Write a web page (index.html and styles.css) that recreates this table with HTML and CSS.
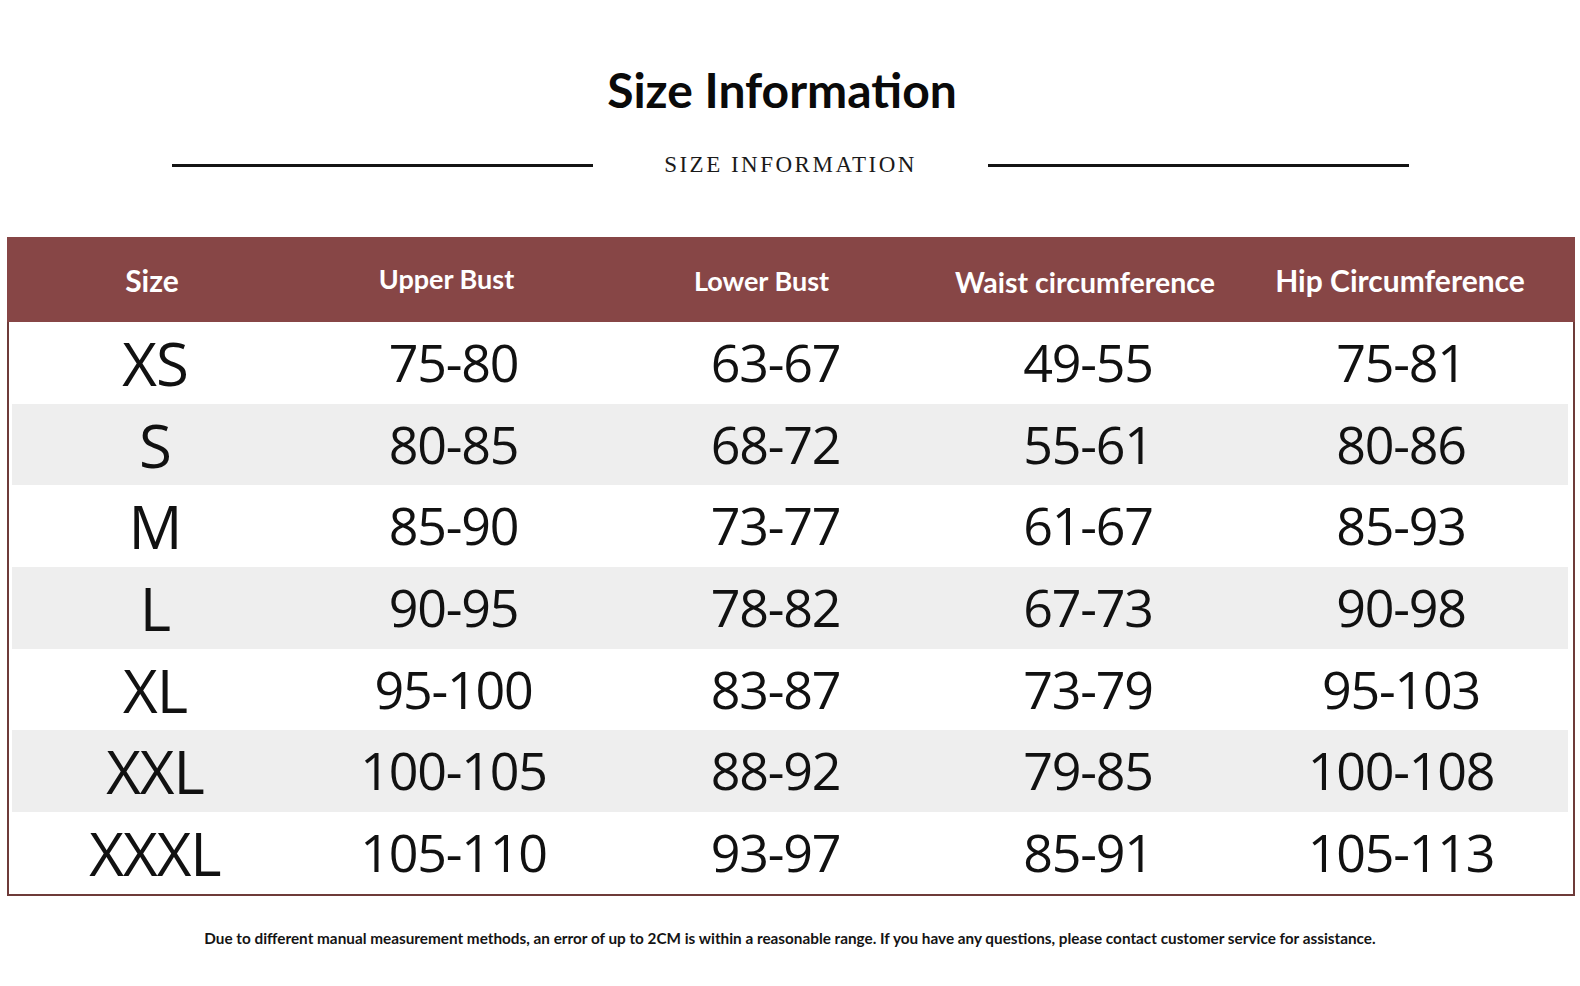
FILE: index.html
```html
<!DOCTYPE html>
<html lang="en">
<head>
<meta charset="utf-8">
<title>Size Information</title>
<link rel="stylesheet" href="styles.css">
</head>
<body>
<div class="page">
  <h1 class="title">Size Information</h1>
  <div class="subtitle">
    <span class="rule"></span>
    <span class="subtitle-text">SIZE INFORMATION</span>
    <span class="rule"></span>
  </div>
  <div class="table">
    <div class="row head">
      <div class="cell h-size">Size</div>
      <div class="cell h-upper">Upper Bust</div>
      <div class="cell h-lower">Lower Bust</div>
      <div class="cell h-waist">Waist circumference</div>
      <div class="cell h-hip">Hip Circumference</div>
    </div>
    <div class="body">
      <div class="row"><div class="cell size">XS</div><div class="cell">75-80</div><div class="cell">63-67</div><div class="cell">49-55</div><div class="cell">75-81</div></div>
      <div class="row alt"><div class="cell size">S</div><div class="cell">80-85</div><div class="cell">68-72</div><div class="cell">55-61</div><div class="cell">80-86</div></div>
      <div class="row"><div class="cell size">M</div><div class="cell">85-90</div><div class="cell">73-77</div><div class="cell">61-67</div><div class="cell">85-93</div></div>
      <div class="row alt"><div class="cell size">L</div><div class="cell">90-95</div><div class="cell">78-82</div><div class="cell">67-73</div><div class="cell">90-98</div></div>
      <div class="row"><div class="cell size">XL</div><div class="cell">95-100</div><div class="cell">83-87</div><div class="cell">73-79</div><div class="cell">95-103</div></div>
      <div class="row alt"><div class="cell size">XXL</div><div class="cell">100-105</div><div class="cell">88-92</div><div class="cell">79-85</div><div class="cell">100-108</div></div>
      <div class="row"><div class="cell size">XXXL</div><div class="cell">105-110</div><div class="cell">93-97</div><div class="cell">85-91</div><div class="cell">105-113</div></div>
    </div>
  </div>
  <p class="note">Due to different manual measurement methods, an error of up to 2CM is within a reasonable range. If you have any questions, please contact customer service for assistance.</p>
</div>
</body>
</html>
```

FILE: styles.css
```css
html, body {
  margin: 0;
  padding: 0;
  background: #ffffff;
}

.page {
  padding-top: 60px;
}

.title {
  margin: 0;
  padding-right: 16px;
  text-align: center;
  font-family: Lato, "Liberation Sans", sans-serif;
  font-weight: 700;
  font-size: 48px;
  line-height: 60px;
  color: #0a0a0a;
}

.subtitle {
  display: flex;
  align-items: center;
  margin-top: 30px;
  padding-left: 172px;
  height: 30px;
}

.rule {
  display: block;
  width: 421px;
  height: 3px;
  background: #141414;
}

.subtitle-text {
  width: 395px;
  text-align: center;
  font-family: "Liberation Serif", "DejaVu Serif", serif;
  font-size: 23px;
  letter-spacing: 2.5px;
  color: #1a1a1a;
}

.table {
  margin-top: 57px;
  margin-left: 7px;
  width: 1568px;
  border: 2px solid #6e3b39;
  border-top: none;
  box-sizing: border-box;
}

.row {
  display: grid;
  grid-template-columns: 286px 311px 333px 292px 1fr;
  align-items: center;
  height: 81.7px;
}

.head {
  height: 85px;
  background: #874646;
  margin: 0 -2px;
  padding: 0 2px;
}

.head .cell {
  font-family: Lato, "Liberation Sans", sans-serif;
  font-weight: 700;
  font-size: 27px;
  color: #ffffff;
  padding-top: 0;
  padding-bottom: 0;
  letter-spacing: 0;
}

.head .h-size { font-size: 30px; }
.head .h-upper { font-size: 27px; padding-bottom: 2px; padding-right: 8px; }
.head .h-lower { font-size: 27px; padding-top: 2px; padding-right: 22px; }
.head .h-waist { font-size: 28.5px; padding-top: 4px; }
.head .h-hip { font-size: 30px; padding-right: 4px; }

.body {
  padding: 0 5px 0 3px;
}

.alt {
  background: #eeeeee;
}

.cell {
  text-align: center;
  font-family: "Open Sans", "Noto Sans", sans-serif;
  font-size: 52px;
  letter-spacing: -1.2px;
  color: #111111;
  padding-bottom: 5px;
}

.cell.size {
  font-size: 60px;
  letter-spacing: -1px;
  padding-bottom: 2px;
}

.note {
  margin: 33px 0 0 0;
  text-align: center;
  font-family: Lato, "Liberation Sans", sans-serif;
  font-weight: 700;
  font-size: 15.3px;
  color: #141414;
}
```
